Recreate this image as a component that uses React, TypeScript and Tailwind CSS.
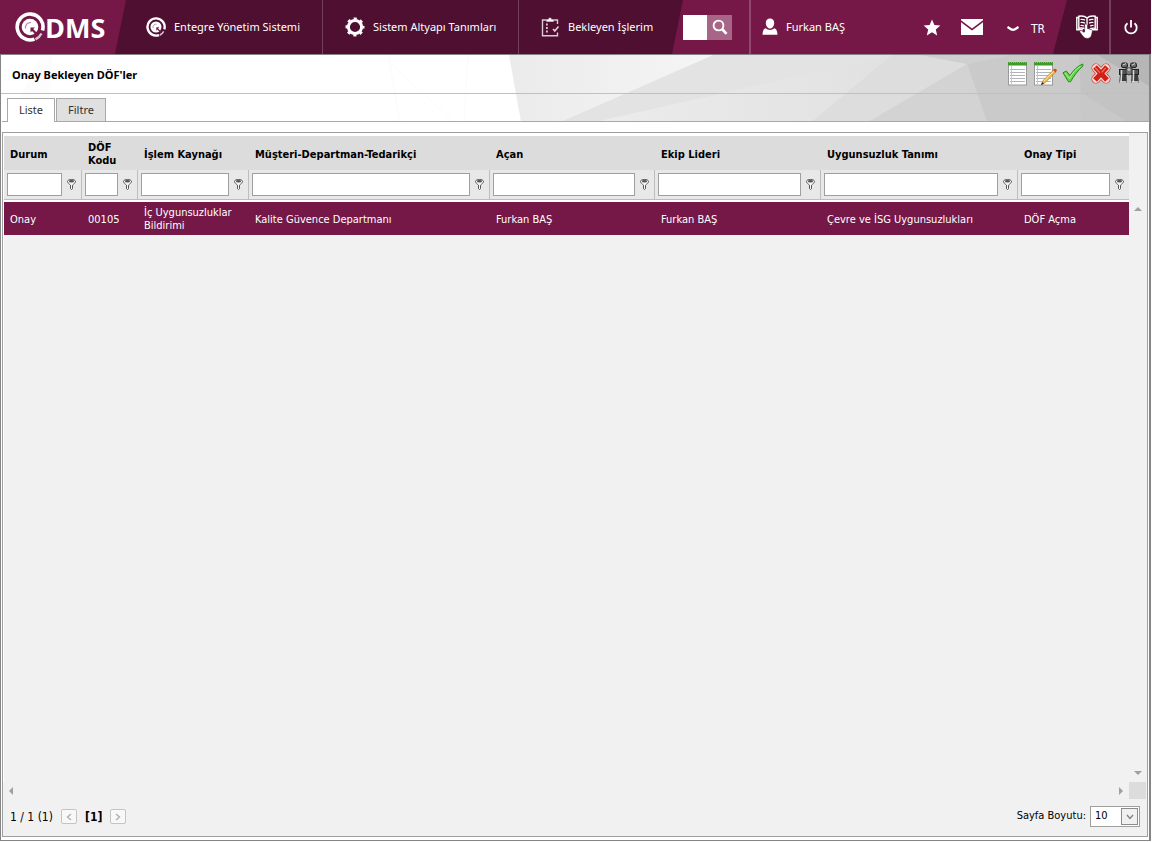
import { useState } from "react";
import type { ReactNode } from "react";
import clsx from "clsx";

interface Column {
  id: string;
  title: string;
  width: number;
  value: string;
}

const COLUMNS: Column[] = [
  { id: "durum", title: "Durum", width: 78, value: "Onay" },
  { id: "kod", title: "DÖF Kodu", width: 56, value: "00105" },
  { id: "kaynak", title: "İşlem Kaynağı", width: 111, value: "İç Uygunsuzluklar Bildirimi" },
  { id: "musteri", title: "Müşteri-Departman-Tedarikçi", width: 241, value: "Kalite Güvence Departmanı" },
  { id: "acan", title: "Açan", width: 165, value: "Furkan BAŞ" },
  { id: "lider", title: "Ekip Lideri", width: 166, value: "Furkan BAŞ" },
  { id: "tanim", title: "Uygunsuzluk Tanımı", width: 197, value: "Çevre ve İSG Uygunsuzlukları" },
  { id: "tip", title: "Onay Tipi", width: 111, value: "DÖF Açma" },
];

function QMark({ size }: { size: number }) {
  return (
    <svg width={size} height={size} viewBox="0 0 30 30" fill="none" className="shrink-0">
      <path d="M19.500 27.100A12.900 12.900 0 1 1 27.500 18.500" stroke="#fff" strokeWidth="3.600" />
      <path d="M20.500 27.300a13 13 0 0 0 6-5.800" stroke="#fff" strokeWidth="2.400" opacity=".75" />
      <circle cx="15" cy="15" r="8.300" fill="#fff" />
      <path d="M10.500 16.500a4.800 4.800 0 0 1 5.500-5.800" stroke="#b98aa3" strokeWidth="1.300" />
      <path d="M15.500 15.500h4.500l-1.800 1.600 5.300 5.300-1.500 1.500-5-5-1.500 1.600z" fill="#751848" />
    </svg>
  );
}

function GearIcon() {
  return (
    <svg width="20" height="20" viewBox="0 0 20 20" fill="none" stroke="#fff" className="shrink-0">
      <circle cx="10" cy="10" r="6.600" strokeWidth="3" />
      <circle cx="10" cy="10" r="8.500" strokeWidth="2" strokeDasharray="3.200 3.476" strokeDashoffset="1.600" />
    </svg>
  );
}

function ClipboardIcon() {
  return (
    <svg width="19" height="20" viewBox="0 0 19 20" fill="none" stroke="#dccbd5" strokeWidth="1.400" className="shrink-0">
      <path d="M5 3H1.500v15.800h15V15.500M16.500 7V3H13" />
      <path d="M5.500 4.500v-2h2c0-2 3-2 3 0h2v2z" fill="#fff" strokeWidth=".6" />
      <path d="M5 7.500h1.800M5 11h1.800M5 14.500h1.800" strokeWidth="1.800" />
      <path d="M12 12l1.800 2 3.700-4.500" strokeWidth="1.700" />
    </svg>
  );
}

function SearchIcon() {
  return (
    <svg width="16" height="17" viewBox="0 0 16 17" fill="none" stroke="#fff">
      <circle cx="6.500" cy="6.500" r="4.900" strokeWidth="1.900" />
      <path d="M10 10l4.500 4.800" strokeWidth="2.700" />
    </svg>
  );
}

function UserIcon() {
  return (
    <svg width="16" height="18" viewBox="0 0 16 18" fill="#fff" className="shrink-0">
      <path d="M8 .5c2.600 0 4.200 1.800 4.200 4.400S10.400 10.500 8 10.500 3.800 7.500 3.800 4.900 5.400.5 8 .5z" />
      <path d="M3.800 10.300C5 11.500 6.500 12 8 12s3-.5 4.200-1.700c2.300.9 3 2.400 3.300 6.500H.5c.3-4.100 1-5.600 3.300-6.500z" />
    </svg>
  );
}

function StarIcon() {
  return (
    <svg width="18" height="17" viewBox="0 0 18 17" fill="#fff">
      <path d="M9 .5l2.400 5.600 6 .5-4.600 4 1.400 5.900L9 13.300l-5.200 3.200 1.400-5.900-4.600-4 6-.5z" />
    </svg>
  );
}

function MailIcon() {
  return (
    <svg width="22" height="16" viewBox="0 0 22 16" fill="#fff">
      <path d="M0 0h22v1.200L11 9.500 0 1.200z" />
      <path d="M0 3.300l11 8.200 11-8.200V16H0z" />
    </svg>
  );
}

function BookIcon() {
  return (
    <svg width="22" height="24" viewBox="0 0 22 24" fill="none" stroke="#fff">
      <path d="M11 3C9 1 5.500.8 2.800 1.200v12C5.500 12.900 8 13 9.500 14M11 3c2-2 5.500-2.200 8.200-1.800v12c-2-.2-4-.1-5.500.5M11 3v7M2.800 2.500H.8v12.200h6M19.200 2.500h2v12.200H15" strokeWidth="1.400" />
      <path d="M4.500 4.500c1.700-.2 3.300 0 4.500.6M4.500 7.500c1.700-.2 3.300 0 4.500.6M4.500 10.500c1.300-.2 2.500 0 3.500.6M17.500 4.500c-1.700-.2-3.300 0-4.500.6M17.500 7.500c-1.700-.2-3.300 0-4.500.6M17.500 10.500c-1.300-.2-2.500 0-3.500.6" strokeWidth="1.200" />
      <path
        d="M8.700 10.200c0-1.800 2.800-1.800 2.800 0v3.300l3.600.9c1 .3 1.400.9 1.200 2l-.8 3.600c-.6 2.300-2 3.400-4 3.400-2.300 0-3.700-.9-4.800-2.600l-2.700-3.500c-.8-1.300.7-2.400 1.900-1.500l1.800 1.400c.7 0 1-.3 1-1z"
        fill="#fff"
        stroke="#4e0f30"
        strokeWidth=".5"
      />
    </svg>
  );
}

function PowerIcon() {
  return (
    <svg width="14" height="15" viewBox="0 0 14 15" fill="none" stroke="#fff" strokeWidth="1.800">
      <path d="M7 0v7.500M3.500 3.200a5.700 5.700 0 1 0 7 0" />
    </svg>
  );
}

function NotepadIcon({ pencil = false }: { pencil?: boolean }) {
  const width = pencil ? 24 : 21;

  return (
    <svg width={width} height="25" viewBox={`0 0 ${width} 25`} fill="none">
      <rect x="1.500" y="1.500" width="18" height="22.500" fill="#fff" stroke="#9a9a9a" />
      <rect x="1" y="1" width="19" height="3.500" fill="#3f9a2b" />
      <path d="M2 1.500h17" stroke="#8bc46f" strokeDasharray="1 1" />
      <path d="M3 8.500h15M3 11.500h15M3 14.500h15M3 17.500h15M3 20.500h15" stroke="#b0b4b8" />
      <path d="M4.500 5v18" stroke="#f0b5b5" />
      {pencil && (
        <>
          <path d="M9 23l1.200-3.500L20.500 9l2.200 2L12 21.800z" fill="#f3bd3c" stroke="#c27b1a" strokeWidth=".7" />
          <path d="M10.800 20.300L21 10" stroke="#ffe48c" />
          <path d="M20 9l1.500-1.300c1.500-.2 2.400.8 2.300 2.100L22.500 11.500z" fill="#d9453b" />
          <path d="M8 24l1-3 2 1.800z" fill="#222" />
        </>
      )}
    </svg>
  );
}

function ApproveIcon() {
  return (
    <svg width="22" height="20" viewBox="0 0 22 20">
      <path d="M1 9.800L4.300 8 8 12.500C11 7.500 15.500 3 20.800 1v2C16 7.500 12 12.500 8.500 18.800H6.500z" fill="#66d24a" stroke="#278a22" strokeWidth="1" />
      <path d="M2.800 10L7.500 15.500C10 10.500 14 6 18.500 3.200" stroke="#b6f29a" fill="none" />
    </svg>
  );
}

function RejectIcon() {
  return (
    <svg width="20" height="21" viewBox="0 0 20 21" strokeLinecap="round" fill="none">
      <path d="M5 5l10 11M15 5L5 16" stroke="#c0473c" strokeWidth="9" />
      <path d="M5 5l10 11M15 5L5 16" stroke="#f6dcd8" strokeWidth="7.400" />
      <path d="M4 4l12 13M16 4L4 17" stroke="#d21f14" strokeWidth="5" strokeLinecap="butt" />
      <path d="M4.500 5l4 4.300M14.500 5.200l-3.500 3.800" stroke="#f0776a" strokeWidth="1.200" />
    </svg>
  );
}

function BinocularsIcon() {
  return (
    <svg width="22" height="22" viewBox="0 0 22 22">
      <rect x="3.500" y="1" width="6" height="4.500" rx="1.500" fill="#666" stroke="#222" />
      <rect x="12.500" y="1" width="6" height="4.500" rx="1.500" fill="#666" stroke="#222" />
      <path d="M5 3l3-1.500M14 3l3-1.500" stroke="#ddd" />
      <rect x="1.500" y="7.500" width="7" height="5" fill="#555" stroke="#222" />
      <rect x="13.500" y="7.500" width="7" height="5" fill="#555" stroke="#222" />
      <path d="M8 6h6v5.500l-3 1.500-3-1.500z" fill="#777" stroke="#333" />
      <circle cx="11" cy="7.500" r="1.500" fill="#bbb" />
      <path d="M2 13h6.500l.5 8H1zM13.500 13H20l1 8h-8z" fill="#3b3b3b" />
      <path d="M3.500 8v5l-.5 7M15.500 8v5l-.2 7" stroke="#d8d8d8" strokeWidth="1.500" fill="none" />
      <path d="M1.500 20h7M13.500 20h7" stroke="#ececec" strokeWidth="1.400" />
    </svg>
  );
}

function FilterIcon() {
  return (
    <svg width="9" height="11" viewBox="0 0 9 11">
      <path d="M.5 2.500C.5 1.200 2.300.5 4.500.5s4 .7 4 2c0 1.300-1.500 2.200-3 3.700v3.500l-1 .8-1-.8V6.200C2 4.700.5 3.800.5 2.500z" fill="#f7f7f7" stroke="#555" />
      <ellipse cx="4.500" cy="2.300" rx="2.600" ry="1.200" fill="#555" />
    </svg>
  );
}

// Köşeli gri zemin
function Facets() {
  return (
    <svg
      className="absolute inset-0 h-full w-full"
      viewBox="1 55 1148 67"
      preserveAspectRatio="xMaxYMin slice"
      aria-hidden="true"
    >
      <defs>
        <linearGradient id="facet-light">
          <stop offset="0" stopColor="#ebebeb" />
          <stop offset="1" stopColor="#f5f5f5" />
        </linearGradient>
        <linearGradient id="facet-low">
          <stop offset="0" stopColor="#ececec" />
          <stop offset="1" stopColor="#e1e1e1" />
        </linearGradient>
      </defs>
      <path d="M42 55H52L49 122H8z" fill="#fcfcfc" />
      <path d="M388 55l12 67M388 61l66 61M468 55l-4 67" stroke="#fafafa" fill="none" />
      <path d="M509 55H713L560 122H521z" fill="url(#facet-light)" />
      <path d="M560 122L713 55H891L811 122z" fill="#e3e3e3" />
      <path d="M595 122L891 55 811 122z" fill="url(#facet-low)" />
      <path d="M891 55H1149V122H811z" fill="#dddddd" />
      <path d="M868 122L967 64 987 122z" fill="#d3d3d3" />
      <path d="M920 55H1010L967 64z" fill="#cfcfcf" />
      <path d="M1010 55H1149V122H987L967 64z" fill="#cacaca" />
      <path d="M1079 55H1149V122H1082z" fill="#c3c3c3" />
      <path d="M1098 55H1149V86z" fill="#b6b6b6" />
      <path d="M1081 92l46 30h-45z" fill="#c8c8c8" />
    </svg>
  );
}

function NavItem({ icon, label, className }: { icon: ReactNode; label: string; className: string }) {
  return (
    <a href="#" className={clsx("flex items-center gap-2 whitespace-nowrap", className)}>
      {icon}
      {label}
    </a>
  );
}

function Header() {
  return (
    <header className="mr-px flex h-[54px] shrink-0 bg-[#751848] font-['Noto_Sans',sans-serif] text-[11px] text-white">
      <a href="#" aria-label="QDMS" className="flex w-[115px] shrink-0 items-center pl-[15px]">
        <QMark size={30} />
        <span className="font-['Open_Sans',sans-serif] text-[27px] leading-none font-bold">DMS</span>
      </a>

      <nav className="flex w-[568px] bg-[#4e0f30] [clip-path:polygon(11px_0,100%_0,calc(100%-11px)_100%,0_100%)]">
        <NavItem icon={<QMark size={20} />} label="Entegre Yönetim Sistemi" className="w-[208px] border-r border-[#75405b] pl-[31px]" />
        <NavItem icon={<GearIcon />} label="Sistem Altyapı Tanımları" className="w-[196px] border-r border-[#75405b] pl-[22px]" />
        <NavItem icon={<ClipboardIcon />} label="Bekleyen İşlerim" className="pl-[22px]" />
      </nav>

      <form className="flex w-[68px] items-center border-r-2 border-[#93476d]" onSubmit={(e) => e.preventDefault()}>
        <input type="text" aria-label="Ara" className="h-[25px] w-6 shrink-0 bg-white px-1 text-black outline-none" />
        <button type="submit" aria-label="Ara" className="flex h-[25px] w-[25px] items-center justify-center bg-[#a76587]">
          <SearchIcon />
        </button>
      </form>

      <a href="#" className="flex items-center gap-2 pl-[11px]">
        <UserIcon />
        Furkan BAŞ
      </a>

      <div className="ml-auto flex items-center">
        <button type="button" aria-label="Favoriler" className="mr-5"><StarIcon /></button>
        <button type="button" aria-label="Mesajlar" className="mr-6"><MailIcon /></button>
      </div>
      <button type="button" className="flex w-[46px] items-center gap-3 pt-1 font-['DejaVu_Sans_Condensed',sans-serif] text-[12px]">
        <svg width="12" height="6" viewBox="0 0 12 6" fill="none" stroke="#fff" strokeWidth="2.400" className="shrink-0">
          <path d="M.5 1L4 3.200q2 1.200 4 0L11.500 1" />
        </svg>
        TR
      </button>
      <div className="flex w-[98px] bg-[#4e0f30] [clip-path:polygon(14px_0,100%_0,100%_100%,0_100%)]">
        <button type="button" aria-label="Yardım" className="flex w-[58px] items-center justify-end border-r-2 border-[#75405b] pr-[11px]">
          <BookIcon />
        </button>
        <button type="button" aria-label="Çıkış" className="flex flex-1 items-center justify-center">
          <PowerIcon />
        </button>
      </div>
    </header>
  );
}

function ToolButton({ label, children }: { label: string; children: ReactNode }) {
  return (
    <button type="button" aria-label={label} className="flex h-7 w-7 items-center justify-center">
      {children}
    </button>
  );
}

function Toolbar() {
  return (
    <div className="relative flex h-[39px] items-center justify-between border-b border-[#c0c0c0] pr-1.5 pl-[11px]">
      <h1 className="mt-0.5 font-['Noto_Sans',sans-serif] text-[11px] font-bold">Onay Bekleyen DÖF'ler</h1>
      <div className="mb-0.5 flex items-center">
        <ToolButton label="Liste"><NotepadIcon /></ToolButton>
        <ToolButton label="Düzenle"><NotepadIcon pencil /></ToolButton>
        <ToolButton label="Onayla"><ApproveIcon /></ToolButton>
        <ToolButton label="Reddet"><RejectIcon /></ToolButton>
        <ToolButton label="Bul"><BinocularsIcon /></ToolButton>
      </div>
    </div>
  );
}

function Grid() {
  return (
    <table className="w-full table-fixed border-separate border-spacing-0 text-left text-[11px] leading-[13px]">
      <colgroup>
        {COLUMNS.map((c) => (
          <col key={c.id} style={{ width: c.width }} />
        ))}
      </colgroup>
      <thead>
        <tr className="h-[34px] bg-[#dcdcdc]">
          {COLUMNS.map((c) => (
            <th key={c.id} scope="col" className="px-1.5 pt-0.5 font-bold">{c.title}</th>
          ))}
        </tr>
        <tr className="bg-[#e8e8e8]">
          {COLUMNS.map((c) => (
            <td key={c.id} className="border-b-2 border-white p-0">
              <div
                className={clsx(
                  "flex h-[30px] items-center gap-[5px] border-b border-[#bdbdbd] px-[3px] pr-[5px]",
                  c.id !== "tip" && "border-r",
                )}
              >
                <input type="text" aria-label={c.title} className="h-[23px] w-full min-w-0 border border-[#9f9f9f] bg-white px-1 outline-none" />
                <button type="button" aria-label={`${c.title} filtrele`} className="shrink-0">
                  <FilterIcon />
                </button>
              </div>
            </td>
          ))}
        </tr>
      </thead>
      <tbody>
        <tr className="h-[33px] bg-[#751848] text-white">
          {COLUMNS.map((c) => (
            <td key={c.id} className="px-1.5 pt-px pb-0">{c.value}</td>
          ))}
        </tr>
      </tbody>
    </table>
  );
}

function Pager() {
  const pageButton = "flex h-[15px] w-4 items-center justify-center rounded-xs border border-[#c4c4c4] bg-[#f8f8f8]";

  return (
    <div className="flex h-[37px] items-center justify-between px-[7px] pb-0.5 text-[11px]">
      <div className="flex items-center gap-2 text-[12px]">
        <span>1 / 1 (1)</span>
        <button type="button" aria-label="Önceki sayfa" className={pageButton}>
          <svg width="6" height="8" viewBox="0 0 6 8" fill="none" stroke="#b0b0b0" strokeWidth="1.400"><path d="M5 1L1.500 4 5 7" /></svg>
        </button>
        <b>[1]</b>
        <button type="button" aria-label="Sonraki sayfa" className={pageButton}>
          <svg width="6" height="8" viewBox="0 0 6 8" fill="none" stroke="#b0b0b0" strokeWidth="1.400"><path d="M1 1l3.500 3L1 7" /></svg>
        </button>
      </div>
      <div className="flex items-center gap-1">
        <label htmlFor="page-size">Sayfa Boyutu:</label>
        <div className="relative">
          <select id="page-size" defaultValue="10" className="block h-[21px] w-[50px] appearance-none border border-[#9f9f9f] bg-white pl-1 text-[11px] outline-none">
            <option>10</option>
            <option>20</option>
            <option>50</option>
          </select>
          <span className="pointer-events-none absolute top-0.5 right-0.5 flex h-[17px] w-[17px] items-center justify-center border border-[#8c8c8c] bg-[#f0f0f0]">
            <svg width="8" height="6" viewBox="0 0 8 6" fill="none" stroke="#808080" strokeWidth="1.300"><path d="M1 1l3 3.500L7 1" /></svg>
          </span>
        </div>
      </div>
    </div>
  );
}

const TABS = ["Liste", "Filtre"];

export default function App() {
  const [tab, setTab] = useState("Liste");

  return (
    <div className="flex min-h-screen flex-col bg-white font-['DejaVu_Sans_Condensed','DejaVu_Sans',sans-serif] text-black">
      <Header />
      <main className="mr-px mb-px flex flex-1 flex-col border border-r-2 border-[#858585] bg-white">
        <div className="relative">
          <Facets />
          <Toolbar />
          <div role="tablist" className="relative ml-px flex h-7 items-end gap-px border-b border-[#a8a8a8] pl-[5px] font-['Noto_Sans',sans-serif] text-[11px]">
            {TABS.map((t) => (
              <button
                key={t}
                type="button"
                role="tab"
                aria-selected={tab === t}
                onClick={() => setTab(t)}
                className={clsx(
                  "border border-b-0 border-[#a8a8a8] px-[11px] text-[#333]",
                  tab === t ? "-mb-px h-6 bg-white" : "h-[23px] bg-[#e0e0e0]",
                )}
              >
                {t}
              </button>
            ))}
          </div>
        </div>

        <section className="mt-2.5 mr-px mb-[3px] ml-px flex flex-1 flex-col border border-[#9f9f9f] bg-[#f1f1f1]">
          <div className="flex flex-1">
            <div className="flex flex-1 flex-col border-t-[3px] border-l border-white">
              <Grid />
            </div>
            <div className="flex w-[18px] flex-col items-center justify-between pt-[74px] pb-[7px]">
              <svg width="8" height="4" viewBox="0 0 8 4" fill="#a0a0a0"><path d="M0 4l4-4 4 4z" /></svg>
              <svg width="8" height="4" viewBox="0 0 8 4" fill="#a0a0a0"><path d="M0 0l4 4 4-4z" /></svg>
            </div>
          </div>
          <div className="flex h-[17px] items-center pr-px">
            <div className="flex flex-1 items-center justify-between px-1.5">
              <svg width="4" height="8" viewBox="0 0 4 8" fill="#a0a0a0"><path d="M4 0L0 4l4 4z" /></svg>
              <svg width="4" height="8" viewBox="0 0 4 8" fill="#a0a0a0"><path d="M0 0l4 4-4 4z" /></svg>
            </div>
            <div className="h-[17px] w-[17px] bg-[#dcdcdc]" />
          </div>
          <Pager />
        </section>
      </main>
    </div>
  );
}
